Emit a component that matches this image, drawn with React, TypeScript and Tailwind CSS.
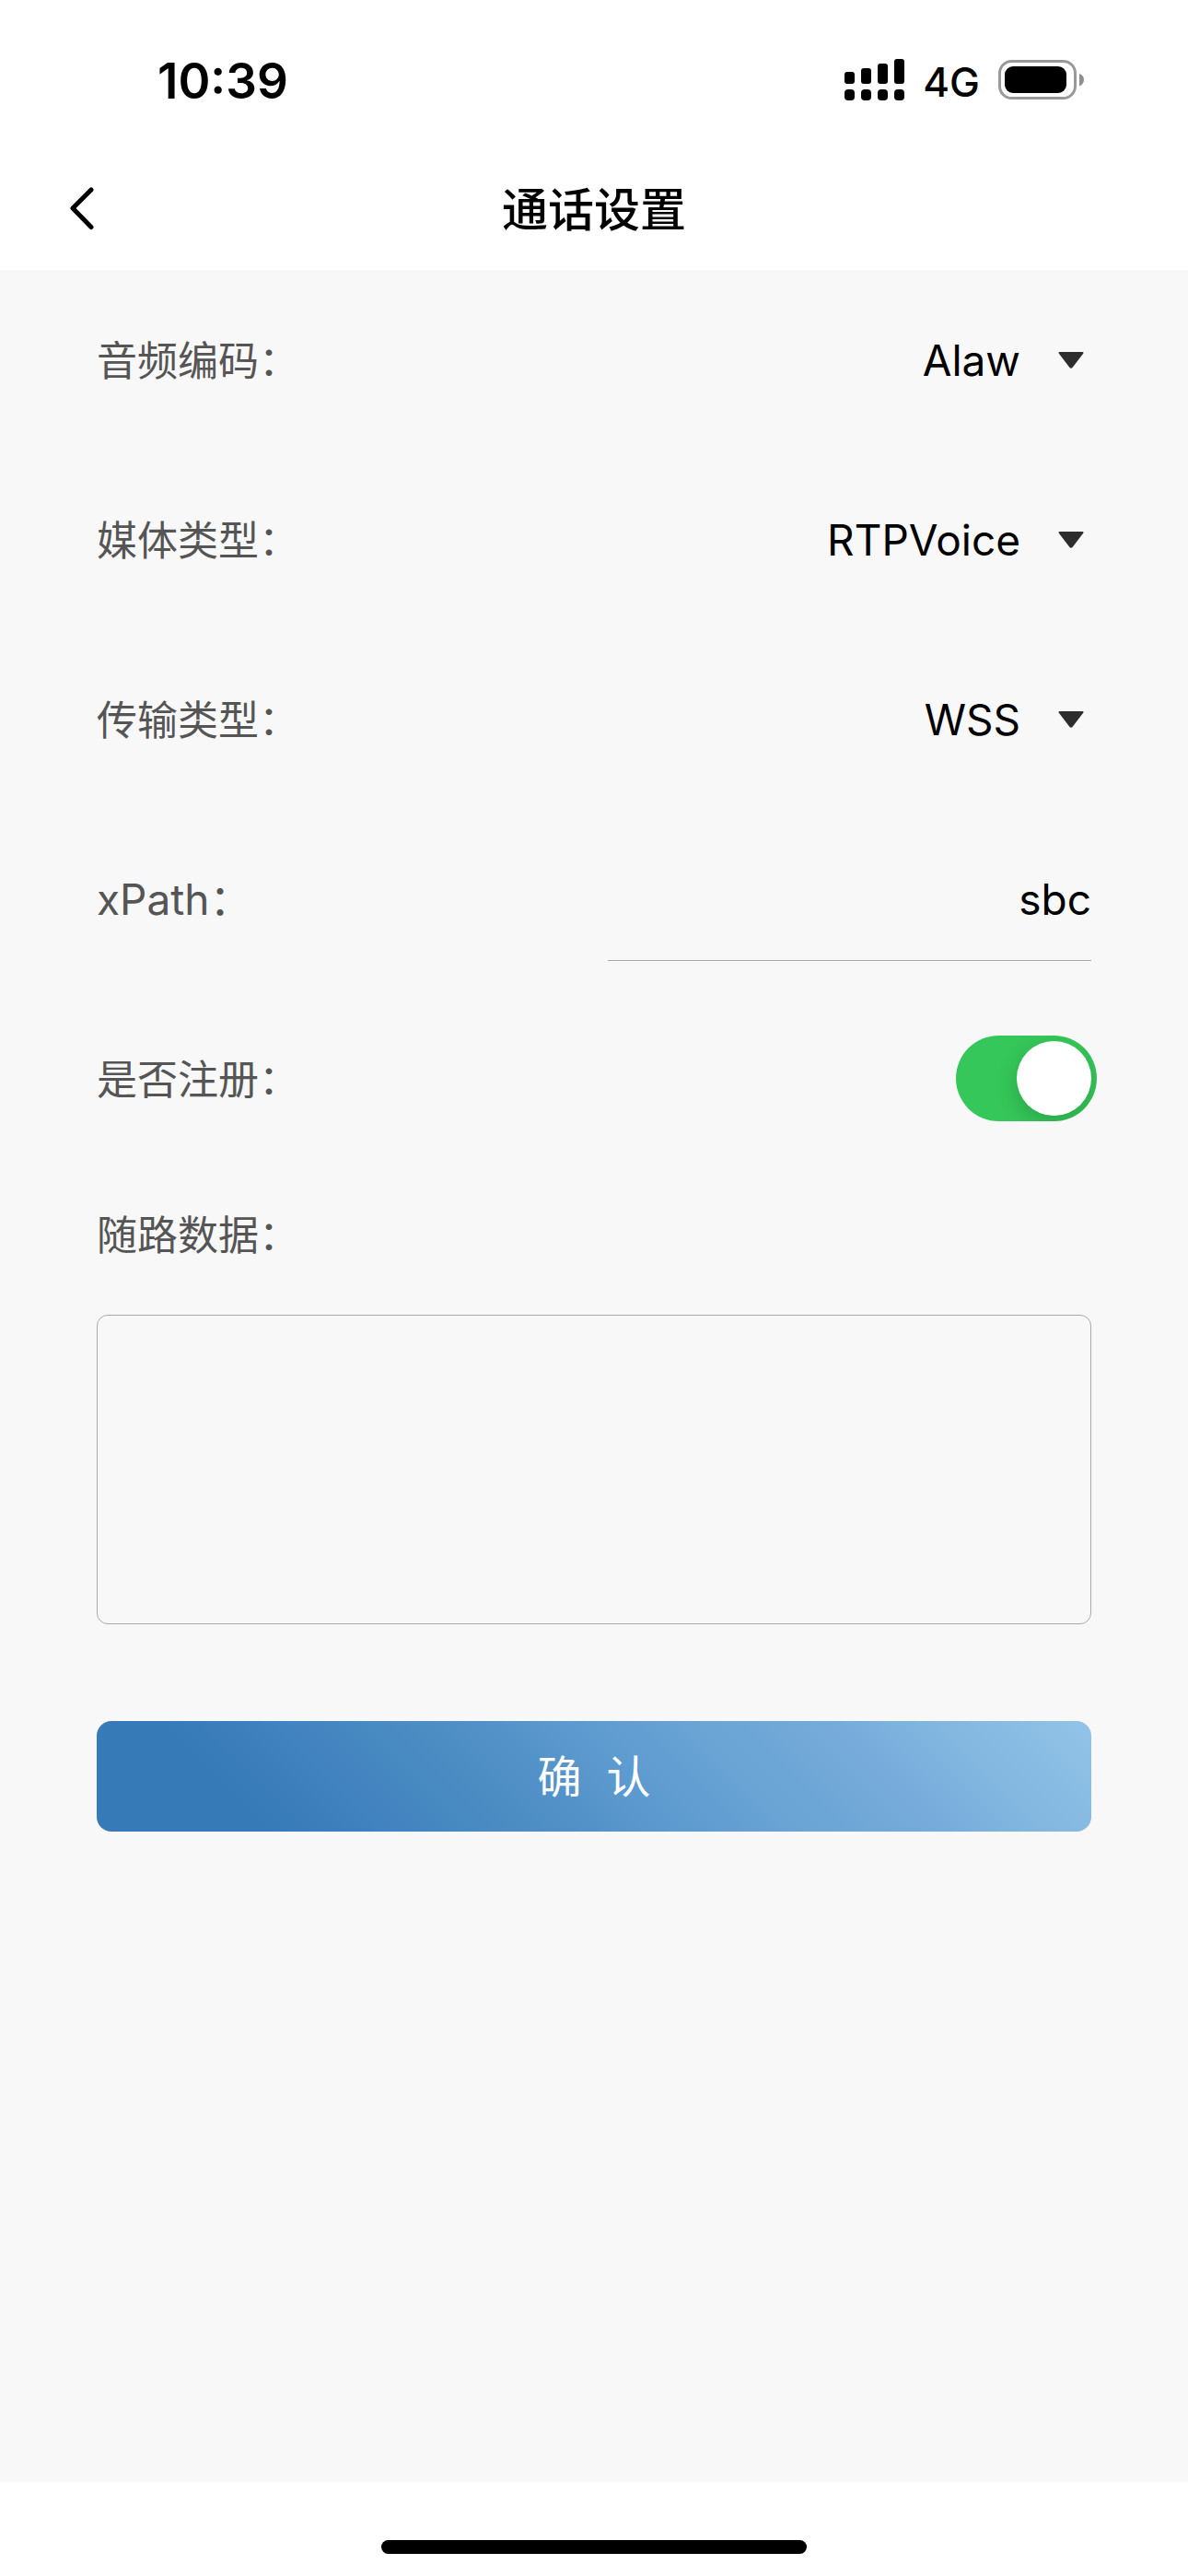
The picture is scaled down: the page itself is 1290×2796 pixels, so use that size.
import React, { useState } from 'react';

type SelectRowProps = {
    id: string;
    label: string;
    options: string[];
    value: string;
    onChange: (value: string) => void;
};

const StatusBar: React.FC = () => (
    <div className="flex h-[161px] items-center justify-between pt-3 pr-[113px] pl-[171px]">
        <span className="pt-1 text-[53px] leading-none font-semibold">10:39</span>
        <div className="flex items-center">
            {/* dual sim signal */}
            <svg className="mr-5 h-[45px] w-[65px]" viewBox="0 0 65 45" aria-hidden="true">
                <rect x="0" y="14" width="11" height="13" rx="3" />
                <rect x="18" y="10" width="11" height="17" rx="3" />
                <rect x="36" y="5" width="11" height="22" rx="3" />
                <rect x="54" y="0" width="11" height="27" rx="3" />
                <rect x="0" y="33" width="11" height="12" rx="4" />
                <rect x="18" y="33" width="11" height="12" rx="4" />
                <rect x="36" y="33" width="11" height="12" rx="4" />
                <rect x="54" y="33" width="11" height="12" rx="4" />
            </svg>
            <span className="mr-5 pt-1 text-[44px] leading-none font-medium">4G</span>
            {/* battery */}
            <svg className="h-[43px] w-[93px]" viewBox="0 0 93 43" aria-hidden="true">
                <rect x="1.5" y="1.5" width="82" height="40" rx="13" fill="none" stroke="#999" strokeWidth="3" />
                <rect x="7" y="7" width="67" height="29" rx="9" />
                <path d="M88 15c3 1 5 3.500 5 6.500s-2 6-5 7z" fill="#8e8e8e" />
            </svg>
        </div>
    </div>
);

const SelectRow: React.FC<SelectRowProps> = ({ id, label, options, value, onChange }) => (
    <div className="flex h-[195px] items-center justify-between">
        <label htmlFor={id} className="pt-0.5 text-[44px] text-[#555]">{label}</label>
        <div className="flex items-center gap-[41px] pr-2">
            <select
                id={id}
                value={value}
                onChange={(e) => onChange(e.target.value)}
                className="w-[300px] appearance-none bg-transparent pt-0.5 text-[46px] [text-align-last:right] outline-none"
            >
                {options.map((option) => (
                    <option key={option}>{option}</option>
                ))}
            </select>
            <svg className="h-[18px] w-[28px]" viewBox="0 0 28 18" aria-hidden="true">
                <path d="M2 0h24q2.500 0 1 2L15.500 17q-1.500 1.500-3 0L1 2Q-.5 0 2 0z" fill="#2d2d2d" />
            </svg>
        </div>
    </div>
);

const App: React.FC = () => {
    const [codec, setCodec] = useState('Alaw');
    const [media, setMedia] = useState('RTPVoice');
    const [transport, setTransport] = useState('WSS');
    const [xPath, setXPath] = useState('sbc');
    const [register, setRegister] = useState(true);
    const [extra, setExtra] = useState('');

    return (
        <div lang="zh-CN" className="flex min-h-screen flex-col bg-white font-['Inter','Noto_Sans_CJK_SC',sans-serif] text-black">
            <header>
                <StatusBar />
                <div className="grid h-[132px] grid-cols-[1fr_auto_1fr] items-center px-[75px]">
                    <button type="button" aria-label="返回" className="w-[28px]">
                        <svg className="h-[48px] w-[28px]" viewBox="0 0 28 48" fill="none" aria-hidden="true">
                            <path d="M24 3L4 23l20 20.500" stroke="#000" strokeWidth="5" strokeLinecap="round" strokeLinejoin="round" />
                        </svg>
                    </button>
                    <h1 className="pt-0.5 text-[50px] leading-none font-medium">通话设置</h1>
                </div>
            </header>

            <main className="flex-1 bg-[#f8f8f8] px-[105px]">
                <form onSubmit={(e) => e.preventDefault()}>
                    <SelectRow id="codec" label="音频编码：" options={['Alaw', 'Ulaw']} value={codec} onChange={setCodec} />
                    <SelectRow id="media" label="媒体类型：" options={['RTPVoice', 'WebRTC']} value={media} onChange={setMedia} />
                    <SelectRow id="transport" label="传输类型：" options={['WSS', 'TCP', 'UDP']} value={transport} onChange={setTransport} />

                    <div className="flex h-[195px] items-center justify-between">
                        <label htmlFor="xpath" className="pt-0.5 text-[46px] text-[#555]">xPath：</label>
                        <input
                            id="xpath"
                            type="text"
                            value={xPath}
                            onChange={(e) => setXPath(e.target.value)}
                            className="h-[135px] w-[525px] border-b border-[#aaa] bg-transparent pt-0.5 text-right text-[46px] outline-none"
                        />
                    </div>

                    <div className="flex h-[195px] items-center justify-between">
                        <label htmlFor="register" className="pt-0.5 text-[44px] text-[#555]">是否注册：</label>
                        <input
                            id="register"
                            type="checkbox"
                            role="switch"
                            checked={register}
                            onChange={(e) => setRegister(e.target.checked)}
                            className="-mr-[6px] flex h-[93px] w-[153px] appearance-none items-center overflow-hidden rounded-full bg-[#e9e9ea] px-[6px] before:size-[81px] before:rounded-full before:bg-white before:shadow-[0px_8px_24px_rgba(0,0,0,0.18)] checked:justify-end checked:bg-[#35c759]"
                        />
                    </div>

                    {/* Call data */}
                    <label htmlFor="extra" className="flex h-[144px] items-center pt-0.5 text-[44px] text-[#555]">随路数据：</label>
                    <textarea
                        id="extra"
                        value={extra}
                        onChange={(e) => setExtra(e.target.value)}
                        className="mt-[15px] block h-[336px] w-full resize-none rounded-xl border border-[#aaa] bg-transparent p-6 text-[44px] outline-none"
                    />

                    <button
                        type="submit"
                        className="mt-[105px] block h-[120px] w-full rounded-2xl bg-[linear-gradient(45deg,#367ab7_16%,#4182c0_26%,#488ac1_35%,#5090c6_43%,#5c99ce_52%,#6aa5d5_65%,#77abdb_77%,#7fb4de_83%,#93c4e8_100%)] pt-0.5 text-[48px] whitespace-pre text-white"
                    >
                        确{'  '}认
                    </button>
                </form>
            </main>

            {/* Home indicator */}
            <footer className="flex h-[102px] items-end justify-center pb-6">
                <div className="h-[15px] w-[462px] rounded-full bg-black" />
            </footer>
        </div>
    );
};

export default App;
